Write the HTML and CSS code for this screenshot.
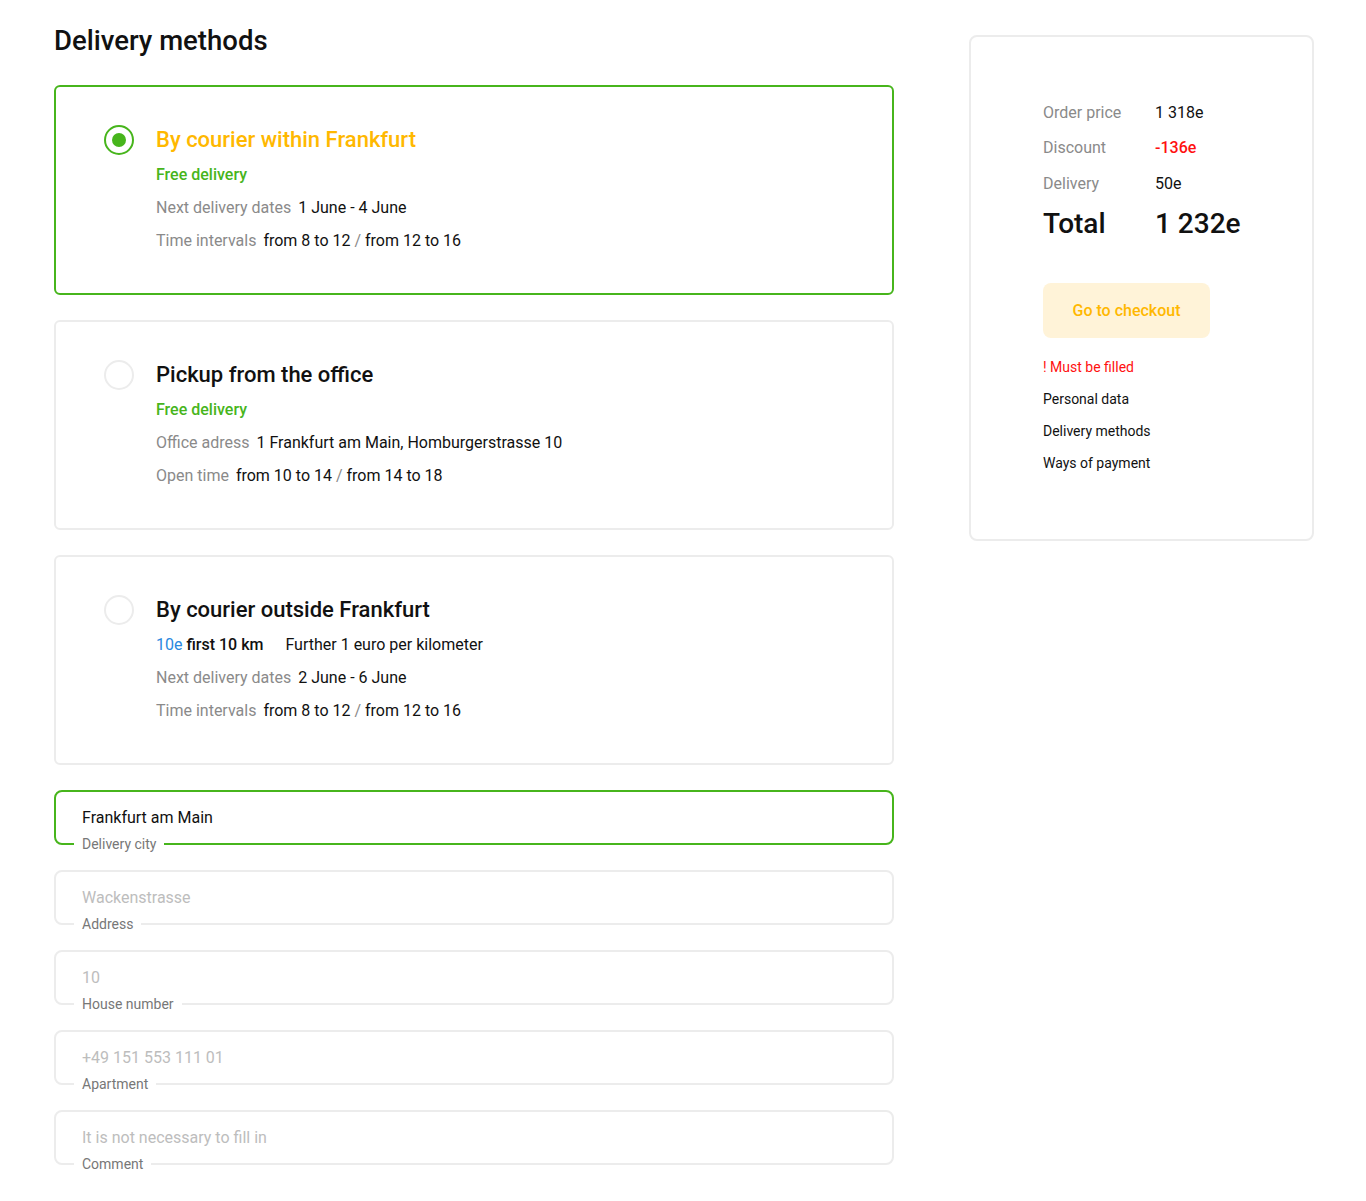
FILE: index.html
```html
<!DOCTYPE html>
<html lang="en">
<head>
<meta charset="utf-8">
<title>Delivery methods</title>
<link rel="stylesheet" href="styles.css">
</head>
<body>
<div class="page">
  <main class="main">
    <h1 class="heading">Delivery methods</h1>

    <div class="methods">
      <div class="method method--active">
        <span class="radio radio--on"><span class="radio-dot"></span></span>
        <div class="method-body">
          <div class="method-title method-title--active">By courier within Frankfurt</div>
          <div class="free">Free delivery</div>
          <div class="row"><span class="muted">Next delivery dates</span> <span>1 June - 4 June</span></div>
          <div class="row"><span class="muted">Time intervals</span> <span>from 8 to 12 <span class="muted">/</span> from 12 to 16</span></div>
        </div>
      </div>

      <div class="method">
        <span class="radio"></span>
        <div class="method-body">
          <div class="method-title">Pickup from the office</div>
          <div class="free">Free delivery</div>
          <div class="row"><span class="muted">Office adress</span> <span>1 Frankfurt am Main, Homburgerstrasse 10</span></div>
          <div class="row"><span class="muted">Open time</span> <span>from 10 to 14 <span class="muted">/</span> from 14 to 18</span></div>
        </div>
      </div>

      <div class="method">
        <span class="radio"></span>
        <div class="method-body">
          <div class="method-title">By courier outside Frankfurt</div>
          <div class="price-line"><span class="blue">10e</span> <b class="strong">first 10 km</b><span class="further">Further 1 euro per kilometer</span></div>
          <div class="row"><span class="muted">Next delivery dates</span> <span>2 June - 6 June</span></div>
          <div class="row"><span class="muted">Time intervals</span> <span>from 8 to 12 <span class="muted">/</span> from 12 to 16</span></div>
        </div>
      </div>
    </div>

    <div class="fields">
      <div class="field field--active">
        <span class="field-value">Frankfurt am Main</span>
        <span class="field-label">Delivery city</span>
      </div>
      <div class="field">
        <span class="field-placeholder">Wackenstrasse</span>
        <span class="field-label">Address</span>
      </div>
      <div class="field">
        <span class="field-placeholder">10</span>
        <span class="field-label">House number</span>
      </div>
      <div class="field">
        <span class="field-placeholder">+49 151 553 111 01</span>
        <span class="field-label">Apartment</span>
      </div>
      <div class="field">
        <span class="field-placeholder">It is not necessary to fill in</span>
        <span class="field-label">Comment</span>
      </div>
    </div>
  </main>

  <aside class="summary">
    <div class="sum-row"><span class="sum-label">Order price</span><span>1 318e</span></div>
    <div class="sum-row"><span class="sum-label">Discount</span><span class="red strong">-136e</span></div>
    <div class="sum-row"><span class="sum-label">Delivery</span><span>50e</span></div>
    <div class="sum-row sum-total"><span class="sum-label-total">Total</span><span>1 232e</span></div>
    <button class="checkout">Go to checkout</button>
    <div class="must">! Must be filled</div>
    <div class="step">Personal data</div>
    <div class="step">Delivery methods</div>
    <div class="step">Ways of payment</div>
  </aside>
</div>
</body>
</html>
```

FILE: styles.css
```css
* { box-sizing: border-box; }

body {
  margin: 0;
  background: #fff;
  color: #111;
  font-family: Roboto, "Noto Sans", Arial, sans-serif;
}

.page {
  display: flex;
  align-items: flex-start;
  padding: 0 52px 0 54px;
  gap: 75px;
}

.main {
  width: 840px;
  flex: none;
}

.heading {
  margin: 24px 0 27px;
  font-size: 27.5px;
  line-height: 34px;
  font-weight: 500;
  color: #111;
}

.methods {
  display: flex;
  flex-direction: column;
  gap: 25px;
}

.method {
  display: flex;
  gap: 22px;
  height: 210px;
  padding: 38px 46px 0 48px;
  border: 2px solid #ececec;
  border-radius: 6px;
}

.method--active {
  border-color: #47b51c;
}

.radio {
  flex: none;
  width: 30px;
  height: 30px;
  border: 2px solid #ececec;
  border-radius: 50%;
  display: flex;
  align-items: center;
  justify-content: center;
}

.radio--on {
  border-color: #47b51c;
}

.radio-dot {
  width: 14px;
  height: 14px;
  border-radius: 50%;
  background: #47b51c;
}

.method-title {
  font-size: 22px;
  line-height: 30px;
  font-weight: 500;
  color: #111;
}

.method-title--active {
  color: #ffb800;
}

.free {
  margin-top: 10px;
  font-size: 16px;
  line-height: 20px;
  font-weight: 500;
  color: #47b51c;
}

.price-line {
  margin-top: 10px;
  font-size: 16px;
  line-height: 20px;
  color: #111;
}

.blue { color: #2a88e0; }
.strong { font-weight: 500; }
.further { margin-left: 22px; }

.row {
  margin-top: 13px;
  font-size: 16px;
  line-height: 20px;
  color: #111;
}

.row > span + span { margin-left: 3px; }

.muted { color: #8a8a8a; }

.fields {
  display: flex;
  flex-direction: column;
  gap: 25px;
  margin-top: 25px;
  padding-bottom: 35px;
}

.field {
  position: relative;
  height: 55px;
  border: 2px solid #ececec;
  border-radius: 8px;
  padding: 16px 26px 0;
  font-size: 16px;
  line-height: 20px;
}

.field--active {
  border-color: #47b51c;
}

.field-value { color: #111; }
.field-placeholder { color: #bdbdbd; }

.field-label {
  position: absolute;
  left: 18px;
  bottom: -10px;
  padding: 0 8px;
  background: #fff;
  font-size: 14px;
  line-height: 18px;
  color: #777;
}

.summary {
  flex: none;
  margin-top: 35px;
  width: 345px;
  height: 506px;
  border: 2px solid #ececec;
  border-radius: 8px;
  padding: 66px 20px 0 72px;
}

.sum-row {
  display: flex;
  font-size: 16px;
  line-height: 20px;
  color: #111;
}

.sum-row + .sum-row { margin-top: 15px; }
.sum-row + .sum-row + .sum-row { margin-top: 16px; }

.sum-label {
  width: 112px;
  color: #8a8a8a;
}

.sum-total {
  font-size: 28px;
  line-height: 36px;
  font-weight: 500;
}

.sum-row + .sum-row + .sum-row.sum-total { margin-top: 12px; }

.sum-label-total { width: 112px; }

.red { color: #ff1010; }

.checkout {
  display: block;
  margin-top: 41px;
  width: 167px;
  height: 55px;
  border: none;
  border-radius: 8px;
  background: #fff3d8;
  color: #ffb800;
  font-family: inherit;
  font-size: 16px;
  font-weight: 500;
  cursor: pointer;
}

.must {
  margin-top: 19px;
  font-size: 14px;
  line-height: 20px;
  color: #ff1010;
}

.step {
  margin-top: 12px;
  font-size: 14px;
  line-height: 20px;
  color: #111;
}
```
